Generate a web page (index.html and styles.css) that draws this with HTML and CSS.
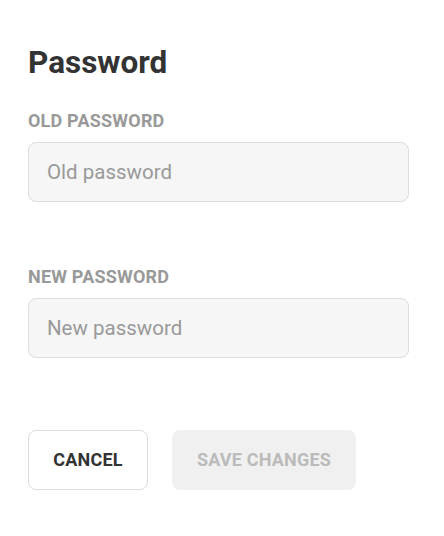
FILE: index.html
```html
<!DOCTYPE html>
<html>
<head>
<meta charset="utf-8">
<link rel="stylesheet" href="styles.css">
</head>
<body>
<div class="panel">
  <h1 class="title">Password</h1>
  <div class="field">
    <label class="label">OLD PASSWORD</label>
    <input class="input" type="password" placeholder="Old password">
  </div>
  <div class="field">
    <label class="label">NEW PASSWORD</label>
    <input class="input" type="password" placeholder="New password">
  </div>
  <div class="actions">
    <button class="btn btn-cancel">CANCEL</button>
    <button class="btn btn-save" disabled>SAVE CHANGES</button>
  </div>
</div>
</body>
</html>
```
FILE: styles.css
```css
html, body {
  margin: 0;
  padding: 0;
  background: #fff;
}
body {
  font-family: Roboto, "Liberation Sans", sans-serif;
}
.panel {
  padding: 44px 35px 0 28px;
  display: flex;
  flex-direction: column;
}
.title {
  margin: 0;
  font-size: 31.5px;
  font-weight: 700;
  color: #333;
  line-height: 38px;
}
.field {
  display: flex;
  flex-direction: column;
}
.field:first-of-type {
  margin-top: 28px;
}
.field + .field {
  margin-top: 64px;
}
.label {
  font-size: 18px;
  font-weight: 700;
  color: #999;
  line-height: 22px;
  letter-spacing: 0.2px;
}
.input {
  margin-top: 10px;
  height: 60px;
  box-sizing: border-box;
  border: 1px solid #ddd;
  border-radius: 8px;
  background: #f6f6f6;
  padding: 0 18px;
  font-family: inherit;
  font-size: 20.5px;
  color: #333;
  outline: none;
}
.input::placeholder {
  color: #999;
}
.actions {
  margin-top: 72px;
  display: flex;
  gap: 24px;
}
.btn {
  height: 60px;
  border-radius: 8px;
  font-family: inherit;
  font-size: 18px;
  font-weight: 700;
  padding: 0;
  box-sizing: border-box;
  letter-spacing: 0.2px;
  line-height: 20px;
}
.btn-cancel {
  width: 120px;
  background: #fff;
  border: 1px solid #ddd;
  color: #333;
}
.btn-save {
  width: 184px;
  background: #f0f0f0;
  border: none;
  color: #bbb;
}
```
